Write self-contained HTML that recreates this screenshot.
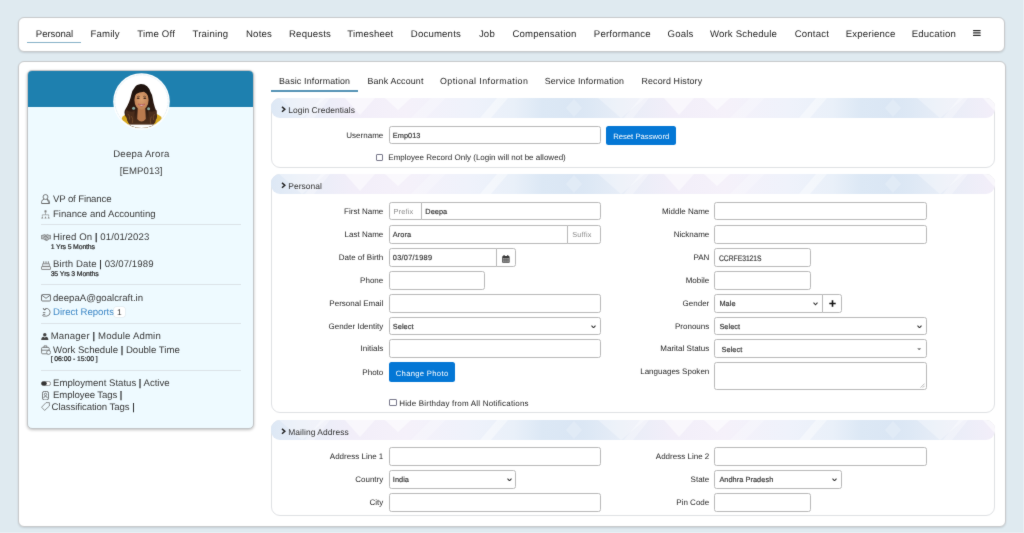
<!DOCTYPE html>
<html lang="en">
<head>
<meta charset="utf-8">
<title>Employee - Deepa Arora</title>
<style>
*{box-sizing:border-box;margin:0;padding:0}
html,body{width:1024px;height:533px;overflow:hidden}
#page{position:absolute;left:0;top:0;width:1024px;height:533px;background:#dfeaf0;will-change:transform;filter:url(#soft)}
body{text-rendering:geometricPrecision;background:#dfeaf0;font-family:"Liberation Sans",sans-serif;font-size:10px;color:#222;position:relative;letter-spacing:-0.17px}
.abs{position:absolute}
/* top nav */
#nav{position:absolute;left:18px;top:17px;width:986.9px;height:35.1px;background:#fff;border:1px solid #c8cacc;border-radius:6px;box-shadow:0 1px 2px rgba(0,0,0,.12)}
#nav span{position:absolute;top:0;height:33px;line-height:33.4px;transform:translateX(-50%);white-space:nowrap;font-size:9.6px;color:#262626;letter-spacing:0.18px}
#nav .ul{position:absolute;left:8.3px;top:24px;width:53.6px;height:1.2px;background:#86b2c8}
/* main */
#main{position:absolute;left:18px;top:61px;width:987.5px;height:465.6px;background:#fff;border:1px solid #c8cacc;border-radius:6px;box-shadow:0 1px 2px rgba(0,0,0,.12)}
/* card */
#card{position:absolute;left:27px;top:69.5px;width:227px;height:359px;background:#eefaff;border:1px solid #c2c4c6;border-radius:5px;box-shadow:0 1px 3px rgba(0,0,0,.25);overflow:hidden}
#card .hd{position:absolute;left:0;top:0;width:100%;height:36.3px;background:#1e80af}
#avatar{position:absolute;left:113px;top:73px;width:57px;height:57px}
.ct{position:absolute;white-space:nowrap;font-size:9.6px;color:#3a3a3a;line-height:12px}
.ct b{color:#1a1a1a;font-weight:normal;-webkit-text-stroke:0.25px #1a1a1a}
.ct.c{transform:translateX(-50%)}
.sm{position:absolute;white-space:nowrap;font-size:6.9px;font-weight:normal;-webkit-text-stroke:0.2px #222;color:#222;letter-spacing:-0.15px;line-height:8px}
.in svg{letter-spacing:0}
.hr{position:absolute;left:41px;width:200px;height:1px;background:#dbe3e7}
.ic{position:absolute}
/* tabs */
.tab{position:absolute;top:75px;white-space:nowrap;font-size:8.85px;color:#262626;line-height:12px;letter-spacing:0.17px;transform:translateX(-50%)}
/* sections */
.sec{position:absolute;left:270.9px;width:724px;background:#fff;border:1px solid #dfe1e4;border-radius:9px}
.sh{position:absolute;left:271.2px;width:723.6px;height:19.5px;border-radius:9px 9px 9px 9px;overflow:hidden}
.sh svg{position:absolute;left:0;top:0}
.st{position:absolute;left:288.2px;white-space:nowrap;font-size:8.45px;color:#333;line-height:12px;letter-spacing:0.07px}
.car{position:absolute;left:280.7px}
.lb{position:absolute;white-space:nowrap;font-size:8px;color:#262626;line-height:12px;text-align:right;letter-spacing:0.01px}
.l1{left:271px;width:112.3px}
.l2{left:597px;width:112.3px}
.in{position:absolute;height:18.7px;background:#fff;border:1px solid #b9b9b9;border-radius:2.5px;font-size:7.35px;color:#333;-webkit-text-stroke:0.18px #3a3a3a;line-height:18.8px;padding-left:2.9px;white-space:nowrap;letter-spacing:0.06px}
.in.ph{color:#8a8a8a;-webkit-text-stroke:0;font-size:7.35px;letter-spacing:0.18px}

.chev{position:absolute;right:3.4px;top:7px}
.btn{position:absolute;background:#0477d5;color:#fff;border-radius:2.5px;font-size:7.7px;text-align:center;white-space:nowrap;letter-spacing:0.01px;padding-top:1.7px}
.cb{position:absolute;width:7.4px;height:7.2px;border:1px solid #77778a;border-radius:1px;background:#fff}
.cl{position:absolute;white-space:nowrap;font-size:8px;color:#262626;line-height:12px;letter-spacing:0.02px}
</style>
</head>
<body>
<svg width="0" height="0" style="position:absolute"><defs><filter id="soft" x="0" y="0" width="100%" height="100%" color-interpolation-filters="sRGB"><feConvolveMatrix order="3" kernelMatrix="1 4 1 4 44 4 1 4 1" divisor="64" edgeMode="duplicate" preserveAlpha="true"/></filter></defs></svg>

<div id="page">
<!-- top navigation -->
<div id="nav">
  <div class="ul"></div>
  <span style="left:35.4px;letter-spacing:-0.1px">Personal</span>
  <span style="left:86.1px">Family</span>
  <span style="left:137.2px">Time Off</span>
  <span style="left:191.4px">Training</span>
  <span style="left:240.0px">Notes</span>
  <span style="left:291.0px">Requests</span>
  <span style="left:351.4px">Timesheet</span>
  <span style="left:416.9px">Documents</span>
  <span style="left:467.9px">Job</span>
  <span style="left:525.5px">Compensation</span>
  <span style="left:603.3px">Performance</span>
  <span style="left:661.6px">Goals</span>
  <span style="left:724.5px">Work Schedule</span>
  <span style="left:792.9px">Contact</span>
  <span style="left:851.6px">Experience</span>
  <span style="left:914.9px">Education</span>
  <svg class="abs" style="left:954.2px;top:11.9px" width="8" height="7" viewBox="0 0 8 7"><rect x="0" y="0" width="7.7" height="1.25" rx=".4" fill="#2a2a2a"/><rect x="0" y="2.35" width="7.7" height="1.25" rx=".4" fill="#2a2a2a"/><rect x="0" y="4.8" width="7.7" height="1.25" rx=".4" fill="#2a2a2a"/></svg>
</div>

<div id="main"></div>

<!-- profile card -->
<div id="card"><div class="hd"></div></div>
<svg id="avatar" viewBox="0 0 57 57">
  <defs><clipPath id="cp"><circle cx="28.5" cy="28.5" r="26.4"/></clipPath>
  <linearGradient id="hg" x1="0" x2="0" y1="0" y2="1"><stop offset="0" stop-color="#1d120d"/><stop offset="0.55" stop-color="#2e1a11"/><stop offset="1" stop-color="#5a3820"/></linearGradient>
  <radialGradient id="fg" cx="0.5" cy="0.45" r="0.6"><stop offset="0" stop-color="#dba070"/><stop offset="1" stop-color="#bd7f52"/></radialGradient></defs>
  <circle cx="28.5" cy="28.5" r="28.3" fill="#fff"/>
  <circle cx="28.5" cy="28.5" r="26.6" fill="#fff" stroke="#cfe2ec" stroke-width="0.5" stroke-dasharray="3 0.6"/>
  <g clip-path="url(#cp)">
    <path d="M7 57 L8.8 45 Q11 41.5 16 40.6 L41 40.6 Q46.5 41.5 48.8 45 L50 57 Z" fill="#d8a91f"/>
    <path d="M27.9 11 Q23.5 11.5 21.7 14.4 Q19 17.5 18.4 21.2 Q17.5 25.5 16.1 29.1 Q14.5 33 12.7 35.8 Q11 38.2 11.6 40.3 Q11.4 43 13.9 44.8 Q14.2 48.5 16.1 50.5 Q17.5 54.5 21 57 L37 57 Q40 54 40.9 51 Q43 49.5 42.6 47.1 Q44.8 44.5 43.7 41.4 Q43.8 38 42 34.7 Q40.4 30 39.8 25.7 Q39.4 21.5 37.5 18.9 Q36.2 15.2 34.1 13.3 Q31.5 11 27.9 11 Z" fill="url(#hg)"/>
    <path d="M24.8 34 L24.2 46 Q28.5 51 32.8 46 L32.2 34 Z" fill="#b97a4e"/>
    <ellipse cx="28.5" cy="27" rx="7.1" ry="9.8" fill="url(#fg)"/>
    <path d="M20.8 25 Q21 16 28.6 15.6 Q35.5 15.8 36.2 24.5 Q34.8 20.5 31 18.8 Q26 19 23 21 Q21.4 22.6 20.8 25 Z" fill="#21140e"/>
    <ellipse cx="25.2" cy="25.3" rx="1.5" ry="0.75" fill="#3d2418"/>
    <ellipse cx="31.8" cy="25.3" rx="1.5" ry="0.75" fill="#3d2418"/>
    <path d="M24.2 23.6 Q25.4 22.9 26.8 23.5 M30.2 23.5 Q31.6 22.9 32.8 23.6" stroke="#2a1810" stroke-width="0.5" fill="none"/>
    <path d="M25.2 31.2 Q28.5 35 31.8 31.2 Q28.5 32.2 25.2 31.2 Z" fill="#f5ece8" stroke="#b04a52" stroke-width="0.7"/>
    <path d="M13 37 Q12 46 18 54 L23.5 57 Q20.5 47 21.8 38 Q17 40 13 37 Z" fill="#4b2d1b"/>
    <path d="M43.5 37 Q44.5 46 38.8 54 L33.5 57 Q36.5 47 35.2 38 Q40 40 43.5 37 Z" fill="#4b2d1b"/>
    <path d="M15 41 Q17.5 43 16.5 46.5 M18.5 43 Q20.5 46 19.3 50 M41.5 41 Q39.5 43.5 40.6 47 M38.4 43.5 Q36.5 47 37.8 51" stroke="#7a4f2d" stroke-width="0.8" fill="none"/>
    <circle cx="20.6" cy="35.3" r="1.5" fill="#86aaa0"/>
    <circle cx="35.6" cy="35.8" r="1.5" fill="#86aaa0"/>
    <rect x="0" y="51.6" width="57" height="6" fill="#fff"/>
  </g>
</svg>

<div class="ct c" style="left:141.4px;top:148.6px;letter-spacing:0.24px">Deepa Arora</div>
<div class="ct c" style="left:141.2px;top:165.5px;letter-spacing:0.08px">[EMP013]</div>

<!-- person icon -->
<svg class="ic" style="left:41.3px;top:194px" width="9" height="10" viewBox="0 0 9 10"><circle cx="4.5" cy="3" r="2.45" fill="none" stroke="#5a5a5a" stroke-width="0.8"/><path d="M0.6 9.5 V7.7 Q0.8 5.7 3 5.2 M6 5.2 Q8.2 5.7 8.4 7.7 V9.5 Z" fill="none" stroke="#5a5a5a" stroke-width="0.8"/><path d="M0.6 9.5 H8.4" stroke="#5a5a5a" stroke-width="0.9"/></svg>
<div class="ct" style="left:53px;top:193.6px;letter-spacing:-0.13px">VP of Finance</div>
<!-- org icon -->
<svg class="ic" style="left:41.3px;top:209.6px" width="9" height="9" viewBox="0 0 9 9"><rect x="3.5" y="0.3" width="2" height="2.2" rx=".5" fill="#808080"/><path d="M4.5 2.5 V4.8 M1.3 6.4 V4.8 H7.7 V6.4" stroke="#808080" stroke-width="0.6" fill="none"/><path d="M0.2 8.6 L1.3 6.2 L2.4 8.6 Z M3.4 8.6 L4.5 6.2 L5.6 8.6 Z M6.6 8.6 L7.7 6.2 L8.8 8.6 Z" fill="#8a8a8a"/></svg>
<div class="ct" style="left:53px;top:208.6px;letter-spacing:0.01px">Finance and Accounting</div>
<div class="hr" style="top:224px"></div>

<!-- handshake icon -->
<svg class="ic" style="left:41px;top:233.9px" width="10" height="7" viewBox="0 0 10 7"><path d="M0.3 1.5 L2 1.2 L3.6 0.6 L5 1.3 L6.6 0.6 L8 1.4 L9.7 1.4 L9.7 4.8 L8.2 4.8 L6 6.5 L4.4 6.1 L2.2 4.8 L0.3 4.8 Z" fill="#b9bfc2" stroke="#6e6e6e" stroke-width="0.7"/><path d="M2.6 3.4 L4.6 2.2 L6.2 3.2 L7.4 4.4 M4 4.8 L5.4 5.6" fill="none" stroke="#5a5a5a" stroke-width="0.7"/></svg>
<div class="ct" style="left:53px;top:232.0px;letter-spacing:0.1px">Hired On <b>|</b> 01/01/2023</div>
<div class="sm" style="left:50.7px;top:244.3px;letter-spacing:-0.15px">1 Yrs 5 Months</div>

<!-- cake icon -->
<svg class="ic" style="left:41px;top:260.5px" width="10" height="9" viewBox="0 0 10 9"><path d="M2.7 0.3 V2.8 M5 0.3 V2.8 M7.3 0.3 V2.8" stroke="#777" stroke-width="1"/><rect x="1.7" y="2.8" width="6.6" height="2.7" fill="#dfe6ea" stroke="#777" stroke-width="0.7"/><rect x="0.5" y="5.5" width="9" height="3" rx="0.5" fill="#e6edf0" stroke="#777" stroke-width="0.8"/></svg>
<div class="ct" style="left:53px;top:259.3px;letter-spacing:0.09px">Birth Date <b>|</b> 03/07/1989</div>
<div class="sm" style="left:50.7px;top:271.0px;letter-spacing:-0.15px">35 Yrs 3 Months</div>
<div class="hr" style="top:284px"></div>

<!-- mail icon -->
<svg class="ic" style="left:41px;top:293.5px" width="10" height="8" viewBox="0 0 10 8"><rect x="0.5" y="0.6" width="9" height="6.4" rx="1" fill="none" stroke="#555" stroke-width="0.8"/><path d="M0.8 1.2 L5 4.3 L9.2 1.2" fill="none" stroke="#555" stroke-width="0.8"/></svg>
<div class="ct" style="left:53px;top:292.5px;letter-spacing:0.02px">deepaA@goalcraft.in</div>
<!-- reports icon -->
<svg class="ic" style="left:41.5px;top:306.8px" width="9" height="10" viewBox="0 0 9 10"><path d="M2.2 2.6 Q3.6 0.9 5.6 1.6 Q8.3 2.6 8.1 5.6 Q7.8 8.7 4.8 9.1 L1.6 9.1 Q0.6 9 0.7 8.2 Q0.8 7.5 1.6 7.4 L3.2 7.4" fill="none" stroke="#5a5a5a" stroke-width="0.75"/><path d="M1.2 1 L2 3 L4 2.4" fill="none" stroke="#5a5a5a" stroke-width="0.75"/><path d="M0.9 5.6 H3.4" stroke="#5a5a5a" stroke-width="0.75"/></svg>
<div class="ct" style="left:53px;top:306.6px;color:#3d87c6;letter-spacing:-0.02px">Direct Reports</div>
<div class="abs" style="left:114.2px;top:307.2px;width:10.4px;height:9.6px;background:#fff;border-radius:2px;box-shadow:0 0 0 0.5px #dde6ea;font-size:8.4px;line-height:10px;text-align:center;color:#333;letter-spacing:0">1</div>
<div class="hr" style="top:323px"></div>

<!-- manager icon -->
<svg class="ic" style="left:41.1px;top:333.1px" width="7.6" height="7.2" viewBox="0 0 7 6.6"><circle cx="3.5" cy="1.7" r="1.6" fill="#444"/><path d="M0.2 6.4 Q0.2 3.6 2.4 3.4 L3.5 4.3 L4.6 3.4 Q6.8 3.6 6.8 6.4 Z" fill="#444"/></svg>
<div class="ct" style="left:50.7px;top:330.6px;letter-spacing:0.17px">Manager <b>|</b> Module Admin</div>
<!-- schedule icon -->
<svg class="ic" style="left:41px;top:344.5px" width="10" height="10" viewBox="0 0 10 10"><rect x="0.6" y="2.4" width="7.6" height="6.4" rx="1" fill="none" stroke="#666" stroke-width="0.8"/><path d="M3 2.4 V0.9 H5.8 V2.4 M0.6 5.2 H8.2" fill="none" stroke="#666" stroke-width="0.8"/><circle cx="7.6" cy="7.4" r="2" fill="#eefaff" stroke="#666" stroke-width="0.7"/></svg>
<div class="ct" style="left:53px;top:344.8px;letter-spacing:0.01px">Work Schedule <b>|</b> Double Time</div>
<div class="sm" style="left:50.7px;top:355.5px;letter-spacing:-0.08px">[ 06:00 - 15:00 ]</div>
<div class="hr" style="top:370px"></div>

<!-- status icon -->
<svg class="ic" style="left:41px;top:381px" width="10" height="5" viewBox="0 0 10 5"><rect x="0.4" y="0.4" width="9.2" height="4.2" rx="2.1" fill="#fff" stroke="#555" stroke-width="0.6"/><rect x="0.4" y="0.4" width="5.4" height="4.2" rx="2.1" fill="#333"/></svg>
<div class="ct" style="left:53px;top:378.1px;letter-spacing:0.0px">Employment Status <b>|</b> Active</div>
<!-- tag badge icon -->
<svg class="ic" style="left:41.6px;top:390.6px" width="7" height="9.4" viewBox="0 0 7 9.4"><rect x="0.45" y="0.45" width="6.1" height="8.5" rx="1.8" fill="none" stroke="#555" stroke-width="0.8"/><circle cx="3.5" cy="3.4" r="1.2" fill="none" stroke="#555" stroke-width="0.7"/><path d="M1.7 7.2 Q1.7 5.4 3.5 5.4 Q5.3 5.4 5.3 7.2" fill="none" stroke="#555" stroke-width="0.7"/></svg>
<div class="ct" style="left:53px;top:389.9px;letter-spacing:-0.1px">Employee Tags <b>|</b></div>
<!-- tag icon -->
<svg class="ic" style="left:41px;top:402px" width="9" height="9" viewBox="0 0 9 9"><path d="M5 0.6 L8.4 0.6 L8.4 4 L3.6 8.4 L0.6 5.2 Z" fill="none" stroke="#666" stroke-width="0.7"/></svg>
<div class="ct" style="left:51.6px;top:401.6px;letter-spacing:-0.07px">Classification Tags <b>|</b></div>

<!-- sub tabs -->
<div class="abs" style="left:271.2px;top:90.4px;width:86.9px;height:1.7px;background:#5593b5"></div>
<div class="tab" style="left:314.6px">Basic Information</div>
<div class="tab" style="left:395.5px">Bank Account</div>
<div class="tab" style="left:484.2px;letter-spacing:0.43px">Optional Information</div>
<div class="tab" style="left:584.4px">Service Information</div>
<div class="tab" style="left:671.9px">Record History</div>

<!-- Login Credentials -->
<div class="sec" style="top:98px;height:69.5px"></div>
<div class="sh" style="top:98.2px">
<svg width="724" height="20" viewBox="0 0 724 20"><defs><linearGradient id="g1" x1="0" x2="1" y1="0" y2="0"><stop offset="0" stop-color="#dde8f5"/><stop offset="0.1" stop-color="#e7edf7"/><stop offset="0.26" stop-color="#f2eef9"/><stop offset="0.42" stop-color="#f5f1fa"/><stop offset="0.62" stop-color="#eff2fb"/><stop offset="0.76" stop-color="#e9f0f9"/><stop offset="0.85" stop-color="#dce8f5"/><stop offset="0.95" stop-color="#dae6f4"/><stop offset="1" stop-color="#dde8f5"/></linearGradient>
<pattern id="hp" width="319" height="20" patternUnits="userSpaceOnUse"><rect width="319" height="20" fill="url(#g1)"/><g fill="#fff"><polygon points="8,0 55,0 31,20" opacity=".3"/><polygon points="34,20 50,0 59,0 43,20" opacity=".3"/><polygon points="74,0 104,0 89,17" opacity=".5"/><polygon points="114,0 140,0 127,12" opacity=".55"/><polygon points="140,20 160,0 175,0 155,20" opacity=".2"/><polygon points="209,20 226,0 237,0 220,20" opacity=".4"/><polygon points="295,10 303,1 311,10 303,19" opacity=".18"/></g></pattern></defs><rect width="724" height="20" fill="url(#hp)"/></svg>
</div>
<svg class="car" style="top:106.3px" width="5" height="6.6" viewBox="0 0 5 6.6"><path d="M1 0.9 L3.8 3.3 L1 5.7" fill="none" stroke="#222" stroke-width="1.5"/></svg>
<div class="st" style="top:103.6px">Login Credentials</div>
<div class="lb l1" style="top:129.5px">Username</div>
<div class="in" style="left:388.9px;top:125.5px;width:211.8px">Emp013</div>
<div class="btn" style="left:606.4px;top:125.8px;width:69.6px;height:19.3px;line-height:19.3px">Reset Password</div>
<div class="cb" style="left:375.8px;top:154.2px"></div>
<div class="cl" style="left:388.3px;top:151.9px">Employee Record Only (Login will not be allowed)</div>

<!-- Personal -->
<div class="sec" style="top:174px;height:239px"></div>
<div class="sh" style="top:174.2px">
<svg width="724" height="20" viewBox="0 0 724 20"><rect width="724" height="20" fill="url(#hp)"/></svg>
</div>
<svg class="car" style="top:182.3px" width="5" height="6.6" viewBox="0 0 5 6.6"><path d="M1 0.9 L3.8 3.3 L1 5.7" fill="none" stroke="#222" stroke-width="1.5"/></svg>
<div class="st" style="top:179.6px">Personal</div>
<div class="lb l1" style="top:205.8px">First Name</div>
<div class="in ph" style="left:388.9px;top:201.8px;width:33px;border-radius:2.5px 0 0 2.5px;padding-left:3.6px">Prefix</div>
<div class="in" style="left:421px;top:201.8px;width:179.7px;border-radius:0 2.5px 2.5px 0;padding-left:3.3px">Deepa</div>
<div class="lb l1" style="top:228.9px">Last Name</div>
<div class="in" style="left:388.9px;top:224.9px;width:178.8px;border-radius:2.5px 0 0 2.5px">Arora</div>
<div class="in ph" style="left:566.7px;top:224.9px;width:34px;border-radius:0 2.5px 2.5px 0;padding-left:4.6px">Suffix</div>
<div class="lb l1" style="top:252.0px">Date of Birth</div>
<div class="in" style="left:388.9px;top:248.0px;width:108px;border-radius:2.5px 0 0 2.5px;letter-spacing:0.27px">03/07/1989</div>
<div class="in" style="left:495.9px;top:248.0px;width:20px;border-radius:0 2.5px 2.5px 0;padding:0"><svg class="abs" style="left:5.4px;top:5.6px" width="7.8" height="8" viewBox="0 0 7.8 8"><rect x="0.2" y="1.1" width="7.4" height="6.7" rx="0.9" fill="#3a3a3a"/><rect x="1.5" y="0" width="1.2" height="1.9" rx=".4" fill="#3a3a3a"/><rect x="5.1" y="0" width="1.2" height="1.9" rx=".4" fill="#3a3a3a"/><rect x="0.9" y="3" width="6" height="4.1" fill="#9a9a9a"/><path d="M0.9 4.4 H6.9 M0.9 5.8 H6.9 M2.9 3 V7.1 M4.9 3 V7.1" stroke="#3a3a3a" stroke-width="0.35"/></svg></div>
<div class="lb l1" style="top:275.1px">Phone</div>
<div class="in" style="left:388.9px;top:271.1px;width:96px"></div>
<div class="lb l1" style="top:298.1px">Personal Email</div>
<div class="in" style="left:388.9px;top:294.1px;width:211.8px"></div>
<div class="lb l1" style="top:320.8px">Gender Identity</div>
<div class="in" style="left:388.9px;top:316.8px;width:211.8px">Select<svg class="chev" width="5" height="3.6" viewBox="0 0 5 3.6"><path d="M0.5 0.6 L2.5 2.8 L4.5 0.6" fill="none" stroke="#333" stroke-width="1.1"/></svg></div>
<div class="lb l1" style="top:343.4px">Initials</div>
<div class="in" style="left:388.9px;top:339.4px;width:211.8px"></div>
<div class="lb l1" style="top:366.5px">Photo</div>
<div class="btn" style="left:389px;top:362px;width:66.2px;height:19.7px;line-height:19.7px;letter-spacing:0.3px">Change Photo</div>
<div class="cb" style="left:389.2px;top:398.8px"></div>
<div class="cl" style="left:399.2px;top:397.8px;letter-spacing:0.19px">Hide Birthday from All Notifications</div>

<div class="lb l2" style="top:205.8px">Middle Name</div>
<div class="in" style="left:714.2px;top:201.8px;width:212.7px"></div>
<div class="lb l2" style="top:228.9px">Nickname</div>
<div class="in" style="left:714.2px;top:224.9px;width:212.7px"></div>
<div class="lb l2" style="top:252.0px">PAN</div>
<div class="in" style="left:714.2px;top:248.0px;width:96.4px;padding-left:3.6px;letter-spacing:0"><span style="display:inline-block;font-size:8px;transform:scaleX(0.84);transform-origin:0 50%;position:relative;top:0.8px">CCRFE3121S</span></div>
<div class="lb l2" style="top:275.1px">Mobile</div>
<div class="in" style="left:714.2px;top:271.1px;width:96.4px"></div>
<div class="lb l2" style="top:298.1px">Gender</div>
<div class="in" style="left:714.2px;top:294.1px;width:108.4px;border-radius:2.5px 0 0 2.5px;padding-left:4.2px">Male<svg class="chev" width="5" height="3.6" viewBox="0 0 5 3.6"><path d="M0.5 0.6 L2.5 2.8 L4.5 0.6" fill="none" stroke="#333" stroke-width="1.1"/></svg></div>
<div class="in" style="left:821.6px;top:294.1px;width:20.4px;border-radius:0 2.5px 2.5px 0;padding:0"><svg class="abs" style="left:6px;top:5.2px" width="7" height="7" viewBox="0 0 7 7"><path d="M3.5 0.3 V6.7 M0.3 3.5 H6.7" stroke="#111" stroke-width="1.6"/></svg></div>
<div class="lb l2" style="top:320.8px">Pronouns</div>
<div class="in" style="left:714.2px;top:316.8px;width:212.7px;padding-left:4.2px">Select<svg class="chev" width="5" height="3.6" viewBox="0 0 5 3.6"><path d="M0.5 0.6 L2.5 2.8 L4.5 0.6" fill="none" stroke="#333" stroke-width="1.1"/></svg></div>
<div class="lb l2" style="top:343.4px">Marital Status</div>
<div class="in" style="left:714.2px;top:339.4px;width:212.7px;padding-left:6.4px;line-height:19.4px">Select<svg class="chev" style="top:7.4px;right:4px" width="4.4" height="2.6" viewBox="0 0 4.4 2.6"><path d="M0.2 0.2 L2.2 2.4 L4.2 0.2 Z" fill="#777"/></svg></div>
<div class="lb l2" style="top:366.3px">Languages Spoken</div>
<div class="in" style="left:714.2px;top:362.1px;width:212.7px;height:27.8px"><svg class="abs" style="right:0.6px;bottom:0.6px" width="5" height="5" viewBox="0 0 5 5"><path d="M4.6 0.6 L0.6 4.6 M4.6 2.8 L2.8 4.6" stroke="#8a8a8a" stroke-width="0.6"/></svg></div>

<!-- Mailing Address -->
<div class="sec" style="top:420px;height:96.2px"></div>
<div class="sh" style="top:420.1px">
<svg width="724" height="20" viewBox="0 0 724 20"><rect width="724" height="20" fill="url(#hp)"/></svg>
</div>
<svg class="car" style="top:428.2px" width="5" height="6.6" viewBox="0 0 5 6.6"><path d="M1 0.9 L3.8 3.3 L1 5.7" fill="none" stroke="#222" stroke-width="1.5"/></svg>
<div class="st" style="top:425.5px">Mailing Address</div>
<div class="lb l1" style="top:451.1px">Address Line 1</div>
<div class="in" style="left:388.9px;top:447.1px;width:211.8px"></div>
<div class="lb l1" style="top:473.9px">Country</div>
<div class="in" style="left:388.9px;top:469.9px;width:127px">India<svg class="chev" width="5" height="3.6" viewBox="0 0 5 3.6"><path d="M0.5 0.6 L2.5 2.8 L4.5 0.6" fill="none" stroke="#333" stroke-width="1.1"/></svg></div>
<div class="lb l1" style="top:497.0px">City</div>
<div class="in" style="left:388.9px;top:493.0px;width:211.8px"></div>
<div class="lb l2" style="top:451.1px">Address Line 2</div>
<div class="in" style="left:714.2px;top:447.1px;width:212.7px"></div>
<div class="lb l2" style="top:473.9px">State</div>
<div class="in" style="left:714.2px;top:469.9px;width:127.6px;padding-left:4.2px">Andhra Pradesh<svg class="chev" width="5" height="3.6" viewBox="0 0 5 3.6"><path d="M0.5 0.6 L2.5 2.8 L4.5 0.6" fill="none" stroke="#333" stroke-width="1.1"/></svg></div>
<div class="lb l2" style="top:497.0px">Pin Code</div>
<div class="in" style="left:714.2px;top:493.0px;width:96.4px"></div>

</div>
<div class="abs" style="left:1023px;top:0;width:1px;height:533px;background:#e8eff4"></div>
<div class="abs" style="left:0;top:531.5px;width:1024px;height:1.5px;background:#e7eef3"></div>
</body>
</html>
